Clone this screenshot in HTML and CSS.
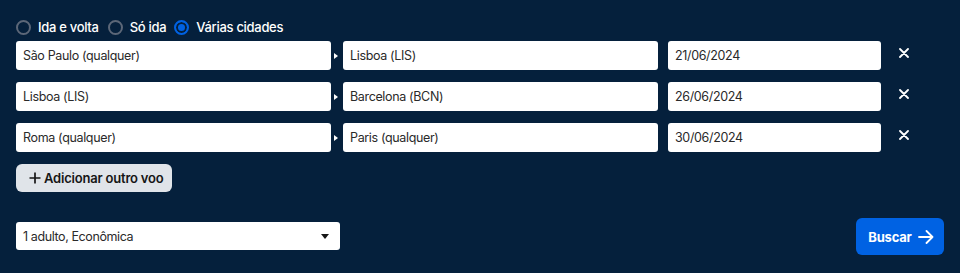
FILE: index.html
```html
<!DOCTYPE html>
<html lang="pt">
<head>
<meta charset="utf-8">
<title>Várias cidades</title>
<link rel="stylesheet" href="styles.css">
</head>
<body>
<div class="panel">
  <div class="trip-types">
    <label class="radio"><span class="dot"></span>Ida e volta</label>
    <label class="radio"><span class="dot"></span>Só ida</label>
    <label class="radio selected"><span class="dot"></span>Várias cidades</label>
  </div>

  <div class="legs">
    <div class="leg">
      <div class="field origin">São Paulo (qualquer)</div>
      <span class="sep"></span>
      <div class="field dest">Lisboa (LIS)</div>
      <div class="field date">21/06/2024</div>
      <span class="remove"><svg viewBox="0 0 10 10" width="10" height="10"><path d="M1 1L9 9M9 1L1 9" stroke="#fff" stroke-width="1.8" stroke-linecap="round"/></svg></span>
    </div>
    <div class="leg">
      <div class="field origin">Lisboa (LIS)</div>
      <span class="sep"></span>
      <div class="field dest">Barcelona (BCN)</div>
      <div class="field date">26/06/2024</div>
      <span class="remove"><svg viewBox="0 0 10 10" width="10" height="10"><path d="M1 1L9 9M9 1L1 9" stroke="#fff" stroke-width="1.8" stroke-linecap="round"/></svg></span>
    </div>
    <div class="leg">
      <div class="field origin">Roma (qualquer)</div>
      <span class="sep"></span>
      <div class="field dest">Paris (qualquer)</div>
      <div class="field date">30/06/2024</div>
      <span class="remove"><svg viewBox="0 0 10 10" width="10" height="10"><path d="M1 1L9 9M9 1L1 9" stroke="#fff" stroke-width="1.8" stroke-linecap="round"/></svg></span>
    </div>
  </div>

  <button class="add"><svg viewBox="0 0 12 12" width="12" height="12"><path d="M6 0.5V11.5M0.5 6H11.5" stroke="#161616" stroke-width="1.7"/></svg>Adicionar outro voo</button>

  <div class="bottom">
    <div class="select">1 adulto, Econômica<span class="caret"></span></div>
    <button class="search">Buscar<svg viewBox="0 0 16 14" width="16" height="14"><path d="M1 7H14.5M8.5 1L14.5 7L8.5 13" fill="none" stroke="#fff" stroke-width="1.8" stroke-linecap="round" stroke-linejoin="round"/></svg></button>
  </div>
</div>
</body>
</html>
```

FILE: styles.css
```css
* { box-sizing: border-box; }
html, body { margin: 0; padding: 0; }
body {
  background: #05203c;
  font-family: Inter, "Noto Sans", "Liberation Sans", sans-serif;
  color: #161616;
  width: 960px;
  height: 273px;
  overflow: hidden;
}
.panel {
  padding: 17px 16px 0 16px;
}
.trip-types {
  display: flex;
  align-items: center;
  height: 20px;
  margin-bottom: 4px;
}
.radio {
  display: flex;
  align-items: center;
  color: #fff;
  font-size: 13px;
  font-weight: 500;
  letter-spacing: -0.3px;
  margin-right: 7px;
}
.radio:first-child { margin-right: 9px; }
.radio:nth-child(2) { margin-right: 8px; }
.dot {
  width: 15px;
  height: 15px;
  border-radius: 50%;
  border: 2px solid #5c6778;
  margin-right: 7px;
  margin-top: 1px;
}
.radio.selected .dot {
  border-color: #0062e3;
  background: #0062e3;
  box-shadow: inset 0 0 0 2px #05203c;
}
.legs {
  display: flex;
  flex-direction: column;
  gap: 12px;
}
.leg {
  display: flex;
  align-items: center;
}
.field {
  background: #fff;
  height: 29px;
  border-radius: 3px;
  display: flex;
  align-items: center;
  padding-left: 7px;
  font-size: 12.5px;
  color: #2a2a2a;
  letter-spacing: -0.35px;
}
.origin { width: 315px; }
.dest { width: 315px; margin-right: 10px; }
.date { width: 213px; }
.sep {
  width: 12px;
  display: flex;
  justify-content: center;
  padding-right: 2px;
}
.sep::before {
  content: "";
  border-left: 4px solid #fff;
  border-top: 3px solid transparent;
  border-bottom: 3px solid transparent;
}
.remove {
  width: 47px;
  display: flex;
  justify-content: center;
  padding-right: 1px;
  margin-bottom: 5px;
}
.remove svg { display: block; }
.add {
  margin-top: 12px;
  height: 28px;
  width: 156px;
  border: none;
  border-radius: 6px;
  background: #e0e4e9;
  font-family: inherit;
  font-size: 13px;
  font-weight: 600;
  color: #161616;
  display: flex;
  align-items: center;
  gap: 3px;
  padding: 0 0 0 13px;
  letter-spacing: -0.2px;
}
.bottom {
  margin-top: 26px;
  display: flex;
  align-items: center;
  justify-content: space-between;
}
.select {
  width: 324px;
  height: 28px;
  background: #fff;
  border-radius: 3px;
  display: flex;
  align-items: center;
  justify-content: space-between;
  padding: 0 11px 0 7px;
  font-size: 12.5px;
  color: #2a2a2a;
  letter-spacing: -0.4px;
  margin-top: -1px;
}
.caret {
  border-top: 5px solid #161616;
  border-left: 4px solid transparent;
  border-right: 4px solid transparent;
}
.search {
  width: 88px;
  height: 37px;
  border: none;
  border-radius: 6px;
  background: #0062e3;
  color: #fff;
  font-family: inherit;
  font-size: 13px;
  font-weight: 700;
  display: flex;
  align-items: center;
  justify-content: center;
  gap: 6px;
  padding: 0 0 0 2px;
  letter-spacing: -0.2px;
}
```
